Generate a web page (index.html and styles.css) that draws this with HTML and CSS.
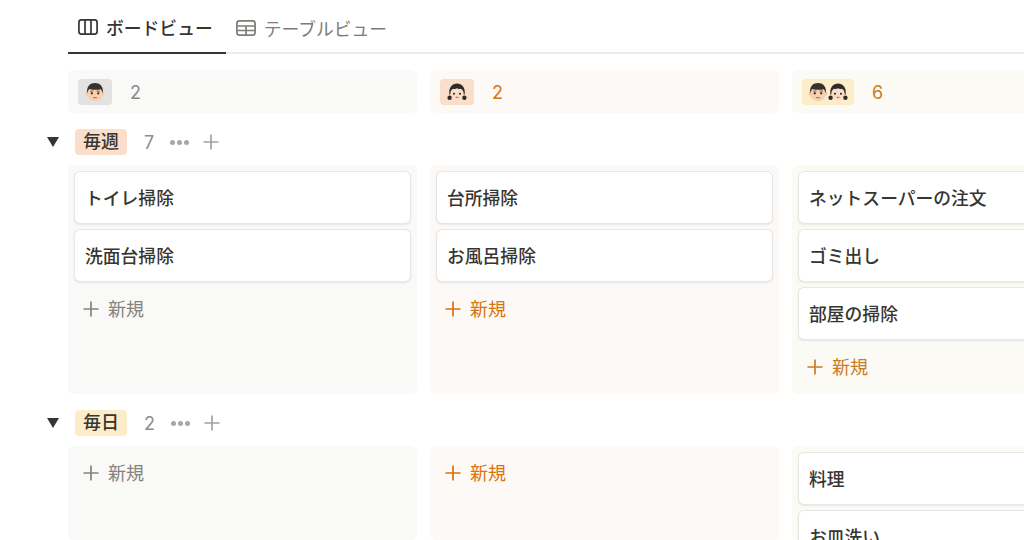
FILE: index.html
```html
<!DOCTYPE html>
<html lang="ja">
<head>
<meta charset="utf-8">
<title>ボードビュー</title>
<link rel="stylesheet" href="styles.css">
</head>
<body>
<svg class="defs" width="0" height="0" aria-hidden="true">
  <defs>
    <symbol id="boy" viewBox="0 0 20 20">
      <ellipse cx="2.300" cy="11.500" rx="1.500" ry="2" fill="#efc4a3"/>
      <ellipse cx="17.700" cy="11.500" rx="1.500" ry="2" fill="#efc4a3"/>
      <circle cx="10" cy="11" r="8.200" fill="#f5d0b2"/>
      <path d="M2.300 11.500C1 4 5.500 1 10 1s9 3 7.700 10.500c-.5-2-1-3.400-2-4.300-2.800.8-7.800.8-11.300-.3-1 .9-1.600 2.300-2.100 4.600z" fill="#37322f"/>
      <circle cx="6.800" cy="11.300" r="1.150" fill="#33261f"/>
      <circle cx="13.200" cy="11.300" r="1.150" fill="#33261f"/>
      <path d="M5.200 9.100h3.200M11.600 9.100h3.200" stroke="#5a463a" stroke-width=".8"/>
      <path d="M8.500 15.700h3" stroke="#a4634c" stroke-width="1" stroke-linecap="round"/>
    </symbol>
    <symbol id="girl" viewBox="0 0 20 20">
      <path d="M2.300 12.500C1.500 5 5.500 1.500 10 1.500s8.500 3.500 7.700 11z" fill="#302b29"/>
      <path d="M3.300 11.500c0-2 1-3.600 2.700-4.800 1.500.6 2.800.5 4-.4 1.200.9 2.500 1 4 .4 1.700 1.200 2.700 2.800 2.700 4.800 0 4-3 6.700-6.700 6.700s-6.700-2.700-6.700-6.700z" fill="#f9dfc9"/>
      <circle cx="2.600" cy="15.800" r="2.200" fill="#302b29"/>
      <circle cx="17.400" cy="15.800" r="2.200" fill="#302b29"/>
      <circle cx="7" cy="11.800" r="1.050" fill="#33261f"/>
      <circle cx="13" cy="11.800" r="1.050" fill="#33261f"/>
      <path d="M9 15.300h2" stroke="#c0564d" stroke-width="1" stroke-linecap="round"/>
    </symbol>
    <symbol id="plus" viewBox="0 0 16 16">
      <path d="M8 .5v15M.5 8h15" stroke="currentColor" stroke-width="1.700" fill="none"/>
    </symbol>
  </defs>
</svg>

<nav class="tabs">
  <div class="tab tab-active">
    <svg class="tab-icon" viewBox="0 0 20 16"><rect x=".9" y=".9" width="18.200" height="14.200" rx="2.500" fill="none" stroke="currentColor" stroke-width="1.700"/><path d="M7 1v14M13 1v14" stroke="currentColor" stroke-width="1.700"/></svg>
    <span>ボードビュー</span>
  </div>
  <div class="tab">
    <svg class="tab-icon" viewBox="0 0 20 16"><rect x=".9" y=".9" width="18.200" height="14.200" rx="2.500" fill="none" stroke="currentColor" stroke-width="1.700"/><path d="M1 6h18M1 10.500h18M10 6v9" stroke="currentColor" stroke-width="1.700"/></svg>
    <span>テーブルビュー</span>
  </div>
</nav>

<div class="columns heads">
  <div class="col-head gray">
    <span class="avatar"><svg class="face"><use href="#boy"/></svg></span><span class="head-count">2</span>
  </div>
  <div class="col-head orange">
    <span class="avatar"><svg class="face"><use href="#girl"/></svg></span><span class="head-count">2</span>
  </div>
  <div class="col-head yellow">
    <span class="avatar"><svg class="face"><use href="#boy"/></svg><svg class="face"><use href="#girl"/></svg></span><span class="head-count">6</span>
  </div>
</div>

<section class="group">
  <div class="group-head">
    <span class="toggle"></span>
    <span class="tag tag-orange">毎週</span>
    <span class="group-count">7</span>
    <span class="dots"><i></i><i></i><i></i></span>
    <svg class="group-plus"><use href="#plus"/></svg>
  </div>
  <div class="columns group-one">
    <div class="col gray">
      <div class="card">トイレ掃除</div>
      <div class="card">洗面台掃除</div>
      <div class="new"><svg class="new-plus"><use href="#plus"/></svg>新規</div>
    </div>
    <div class="col orange">
      <div class="card">台所掃除</div>
      <div class="card">お風呂掃除</div>
      <div class="new"><svg class="new-plus"><use href="#plus"/></svg>新規</div>
    </div>
    <div class="col yellow">
      <div class="card">ネットスーパーの注文</div>
      <div class="card">ゴミ出し</div>
      <div class="card">部屋の掃除</div>
      <div class="new"><svg class="new-plus"><use href="#plus"/></svg>新規</div>
    </div>
  </div>
</section>

<section class="group">
  <div class="group-head">
    <span class="toggle"></span>
    <span class="tag tag-yellow">毎日</span>
    <span class="group-count">2</span>
    <span class="dots"><i></i><i></i><i></i></span>
    <svg class="group-plus"><use href="#plus"/></svg>
  </div>
  <div class="columns group-two">
    <div class="col gray">
      <div class="new first"><svg class="new-plus"><use href="#plus"/></svg>新規</div>
    </div>
    <div class="col orange">
      <div class="new first"><svg class="new-plus"><use href="#plus"/></svg>新規</div>
    </div>
    <div class="col yellow">
      <div class="card">料理</div>
      <div class="card">お皿洗い</div>
    </div>
  </div>
</section>
</body>
</html>
```
FILE: styles.css
```css
* {
  box-sizing: border-box;
}

html,
body {
  margin: 0;
  height: 540px;
  overflow: hidden;
  background: #fff;
}

body {
  width: 1024px;
  font-family: Inter, "Noto Sans CJK JP", sans-serif;
  color: #37352f;
}

.defs {
  display: block;
  height: 0;
}

/* Tabs */
.tabs {
  display: flex;
  height: 54px;
  margin-left: 68px;
  border-bottom: 2px solid #ebebea;
}

.tab {
  display: flex;
  align-items: center;
  gap: 8px;
  height: 54px;
  padding: 1px 13px 0 10px;
  font-size: 17.800px;
  font-weight: 400;
  color: #7e7c78;
}

.tab-active {
  color: #37352f;
  font-weight: 500;
  border-bottom: 2px solid #37352f;
}

.tab-icon {
  width: 20px;
  height: 16px;
  flex: none;
}

/* Columns */
.columns {
  display: flex;
  gap: 13px;
  margin-left: 68px;
  width: 1073px;
}

.heads {
  margin-top: 16px;
}

.col-head {
  display: flex;
  align-items: center;
  width: 349px;
  flex: none;
  height: 43px;
  padding-left: 10px;
  border-radius: 6px;
}

.avatar {
  display: flex;
  align-items: center;
  justify-content: center;
  height: 26px;
  width: 34px;
  border-radius: 4px;
}

.face {
  width: 20px;
  height: 20px;
  flex: none;
}

.head-count {
  margin-left: 18px;
  padding-top: 1px;
  font-size: 18px;
}

.gray.col-head {
  background: #f9f9f8;
  color: #8b8985;
}

.gray .avatar {
  background: #e3e2e0;
}

.orange.col-head {
  background: #fdf9f6;
  color: #d9730d;
}

.orange .avatar {
  background: #fadec9;
}

.yellow.col-head {
  background: #fbfaf5;
  color: #cb7b1f;
}

.yellow .avatar {
  background: #fdecc8;
  width: 52px;
}

/* Groups */
.group-head {
  display: flex;
  align-items: center;
  height: 26px;
  margin: 16px 0 10px 47px;
}

.group-two .col {
  height: 94px;
}

.toggle {
  width: 12px;
  height: 10px;
  background: #37352f;
  clip-path: polygon(0 0, 100% 0, 50% 100%);
}

.tag {
  margin-left: 16px;
  width: 52px;
  height: 26px;
  border-radius: 4px;
  font-size: 18px;
  font-weight: 500;
  line-height: 26px;
  text-align: center;
}

.tag-orange {
  background: #fadec9;
}

.tag-yellow {
  background: #fdecc8;
}

.group-count {
  margin-left: 17px;
  font-size: 18px;
  color: #8f8d89;
}

.dots {
  display: flex;
  gap: 2px;
  margin-left: 16px;
}

.dots i {
  width: 5px;
  height: 5px;
  border-radius: 50%;
  background: #a9a7a3;
}

.group-plus {
  width: 16px;
  height: 16px;
  margin-left: 14px;
  color: #a5a3a0;
}

.col {
  width: 349px;
  flex: none;
  height: 229px;
  padding: 6px;
  border-radius: 6px;
}

.col.gray {
  background: #f9f9f8;
  color: #84827e;
}

.col.orange {
  background: #fdf9f6;
  color: #d9730d;
}

.col.yellow {
  background: #fbfaf5;
  color: #cb7b1f;
}

.card {
  display: flex;
  align-items: center;
  height: 53px;
  margin-bottom: 5px;
  padding: 0 10px 2px;
  background: #fff;
  border: 1px solid rgba(15, 15, 15, .1);
  border-radius: 6px;
  box-shadow: 0 1px 2px rgba(15, 15, 15, .08);
  font-size: 17.800px;
  font-weight: 500;
  color: #37352f;
}

.new {
  display: flex;
  align-items: center;
  gap: 9px;
  height: 42px;
  margin-top: 6px;
  padding: 0 0 3px 9px;
  font-size: 18px;
  font-weight: 400;
}

.new.first {
  margin-top: 0;
}

.new-plus {
  width: 16px;
  height: 16px;
  margin-top: 3px;
  flex: none;
}
```
